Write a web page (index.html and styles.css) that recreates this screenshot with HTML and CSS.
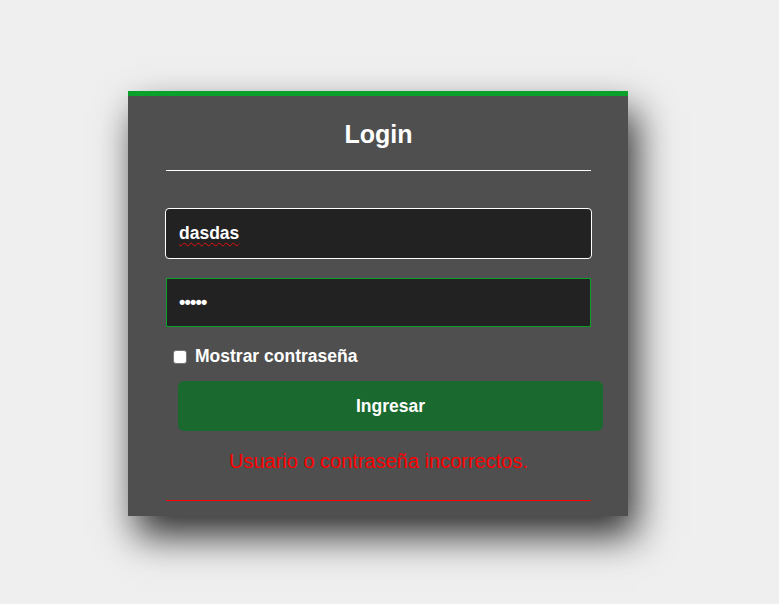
FILE: index.html
```html
<!DOCTYPE html>
<html lang="es">
<head>
<meta charset="utf-8">
<title>Login</title>
<link rel="stylesheet" href="styles.css">
</head>
<body>
<div class="card">
  <h1 class="title">Login</h1>
  <div class="rule"></div>
  <div class="field user"><span class="user-text">dasdas</span></div>
  <div class="field pass"><span class="dots">•••••</span></div>
  <label class="show"><span class="box"></span>Mostrar contraseña</label>
  <div class="btn">Ingresar</div>
  <p class="error">Usuario o contraseña incorrectos.</p>
  <div class="rule red"></div>
</div>
</body>
</html>
```
FILE: styles.css
```css
html, body { margin: 0; padding: 0; }
body {
  background: #efefef;
  font-family: "Liberation Sans", Arial, sans-serif;
  width: 779px;
  height: 604px;
  overflow: hidden;
}
.card {
  margin: 91px 0 0 128px;
  width: 500px;
  height: 425px;
  box-sizing: border-box;
  background: #4f4f4f;
  border-top: 5px solid #0aa02a;
  box-shadow: 8px 20px 36px rgba(0,0,0,0.8);
  padding: 0 37px 0 38px;
}
.title {
  margin: 0;
  padding-top: 24px;
  height: 74px;
  box-sizing: border-box;
  font-size: 25px;
  line-height: 28px;
  text-align: center;
  color: #fff;
  font-weight: bold;
}
.rule {
  height: 1px;
  background: #fff;
  width: 425px;
}
.field {
  box-sizing: border-box;
  background: #232223;
  color: #fff;
  font-weight: bold;
  font-size: 18px;
  display: flex;
  align-items: center;
  padding-left: 13px;
}
.user {
  margin-top: 37px;
  width: 427px;
  margin-left: -1px;
  height: 51px;
  border: 1px solid #fff;
  border-radius: 4px;
}
.user-text {
  font-size: 17.5px;
  text-decoration: underline wavy #e01010;
  text-decoration-thickness: 1px;
  text-underline-offset: 3px;
}
.pass {
  margin-top: 19px;
  width: 425px;
  height: 49px;
  border: 1px solid #0aa02a;
  font-size: 18px;
  padding-left: 12px;
  letter-spacing: -0.8px;
}
.show {
  display: flex;
  align-items: center;
  margin-top: 19px;
  margin-left: 7px;
  color: #fff;
  font-weight: bold;
  font-size: 17.5px;
  height: 21px;
}
.box {
  width: 14px;
  height: 14px;
  box-sizing: border-box;
  background: #fff;
  border: 1px solid #767676;
  border-radius: 3px;
  margin-right: 8px;
}
.btn {
  margin-top: 14px;
  margin-left: 12px;
  width: 425px;
  height: 50px;
  background: #1a692e;
  border-radius: 6px;
  color: #fff;
  font-weight: bold;
  font-size: 17.5px;
  display: flex;
  align-items: center;
  justify-content: center;
}
.error {
  margin: 19px 0 0;
  text-align: center;
  color: #ff0000;
  font-size: 20px;
  line-height: 22px;
}
.rule.red {
  margin-top: 28px;
  background: #ff0000;
}
```
